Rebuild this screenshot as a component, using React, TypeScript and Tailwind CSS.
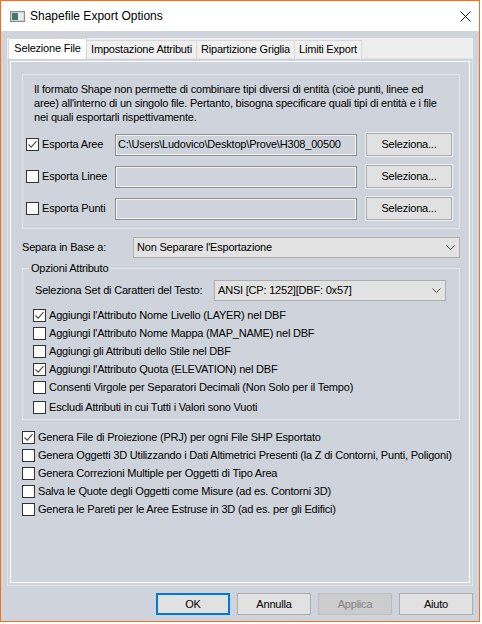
import React from 'react';

const font = { fontFamily: '"Liberation Sans", Arial, sans-serif' };

function Box({ checked }: { checked?: boolean }) {
  return (
    <span className="flex h-[13px] w-[13px] shrink-0 items-center justify-center border border-[#333333] bg-white">
      {checked && (
        <svg width="11" height="11" viewBox="0 0 11 11">
          <path d="M1.5 5.5 L4.2 8.2 L9.5 2.2" fill="none" stroke="#4a4a4a" strokeWidth="1.1" />
        </svg>
      )}
    </span>
  );
}

function Check({ label, checked, className = '' }: { label: string; checked?: boolean; className?: string }) {
  return (
    <div className={`flex h-[18px] items-center gap-[3px] ${className}`}>
      <Box checked={checked} />
      <span className="whitespace-nowrap">{label}</span>
    </div>
  );
}

function Chevron() {
  return (
    <svg width="9" height="5" viewBox="0 0 9 5">
      <path d="M0.5 0.5 L4.5 4.5 L8.5 0.5" fill="none" stroke="#505050" strokeWidth="1" />
    </svg>
  );
}

function Dropdown({ value, className }: { value: string; className: string }) {
  return (
    <div className={`flex h-[21px] items-center border border-[#adadad] bg-[#e3e3e3] pl-[3px] pr-[4px] ${className}`}>
      <span className="flex-1 whitespace-nowrap">{value}</span>
      <Chevron />
    </div>
  );
}

function FileRow({ label, checked, path }: { label: string; checked?: boolean; path?: string }) {
  return (
    <div className="flex h-[23px] items-center">
      <div className="flex w-[89px] items-center gap-[3px]">
        <Box checked={checked} />
        <span className="whitespace-nowrap">{label}</span>
      </div>
      <div className="flex h-[22px] w-[242px] items-center overflow-hidden whitespace-nowrap border border-[#8e8e8e] pl-[2px] shadow-[inset_0_0_0_1px_#f2f2f2]">
        {path}
      </div>
      <button className="ml-[9px] h-[23px] w-[86px] border border-[#adadad] bg-[#e1e1e1] shadow-[0_0_0_1px_#eeeeee]">
        Seleziona...
      </button>
    </div>
  );
}

export default function App() {
  return (
    <div className="h-[624px] w-[482px] bg-white" style={font}>
      <div className="flex h-[622px] w-[480px] flex-col border border-[#f0701e] bg-[#cfd4dc] text-[11px] tracking-[-0.2px] text-black">
        {/* title bar */}
        <div className="flex h-[30px] shrink-0 items-center bg-white pl-[9px]">
          <svg width="15" height="11" viewBox="0 0 15 11">
            <rect x="0.5" y="0.5" width="14" height="10" fill="#d4d4d4" stroke="#8a8a8a" />
            <rect x="2" y="2" width="6" height="7" fill="#3f7a6a" />
            <rect x="8" y="2" width="5" height="7" fill="#eaeaea" />
          </svg>
          <span className="ml-[5px] text-[12px] tracking-normal">Shapefile Export Options</span>
          <svg className="ml-auto mr-[8px]" width="11" height="11" viewBox="0 0 11 11">
            <path d="M0.5 0.5 L10.5 10.5 M10.5 0.5 L0.5 10.5" stroke="#111" strokeWidth="1" />
          </svg>
        </div>

        <div className="flex flex-1 flex-col px-[6px] pt-[7px]">
          {/* tab control */}
          <div className="flex h-[548px] w-[466px] flex-col bg-[#eeeeee]">
            <div className="flex h-[20px] shrink-0 items-end pl-[1px]">
              <div className="relative z-10 -mb-px flex h-[21px] w-[79px] items-center justify-center border border-b-0 border-[#d9d9d9] bg-white pb-[2px]">
                Selezione File
              </div>
              <div className="flex h-[18px] w-[110px] items-center justify-center border border-b-0 border-l-0 border-[#d9d9d9] bg-[#f0f0f0]">
                Impostazione Attributi
              </div>
              <div className="flex h-[18px] w-[98px] items-center justify-center border border-b-0 border-l-0 border-[#d9d9d9] bg-[#f0f0f0]">
                Ripartizione Griglia
              </div>
              <div className="flex h-[18px] w-[67px] items-center justify-center border border-b-0 border-l-0 border-[#d9d9d9] bg-[#f0f0f0]">
                Limiti Export
              </div>
            </div>
            <div className="flex-1 border border-[#e4e4e4] bg-[#cfd4dc] p-[2px]">
              <div className="h-full border border-white pl-[11px] pt-[12px]">
                {/* group 1 */}
                <div className="h-[155px] w-[438px] border border-[#e2e5ea] pl-[3px] pt-[7px]">
                  <p className="pl-[8px] leading-[14px]">
                    Il formato Shape non permette di combinare tipi diversi di entità (cioè punti, linee ed
                    <br />
                    aree) all'interno di un singolo file. Pertanto, bisogna specificare quali tipi di entità e i file
                    <br />
                    nei quali esportarli rispettivamente.
                  </p>
                  <div className="mt-[9px] flex flex-col gap-[9px]">
                    <FileRow label="Esporta Aree" checked path="C:\Users\Ludovico\Desktop\Prove\H308_00500" />
                    <FileRow label="Esporta Linee" />
                    <FileRow label="Esporta Punti" />
                  </div>
                </div>

                {/* separa */}
                <div className="mt-[8px] flex h-[21px] items-center">
                  <span className="w-[111px]">Separa in Base a:</span>
                  <Dropdown value="Non Separare l'Esportazione" className="w-[327px]" />
                </div>

                {/* group 2 */}
                <fieldset className="mt-[3px] w-[438px] border border-[#e2e5ea] pb-[3px]">
                  <legend className="ml-[6px] px-[2px] leading-[14px]">Opzioni Attributo</legend>
                  <div className="mt-[5px] flex h-[21px] items-center">
                    <span className="ml-[12px] w-[179px]">Seleziona Set di Caratteri del Testo:</span>
                    <Dropdown value="ANSI [CP: 1252][DBF: 0x57]" className="w-[232px]" />
                  </div>
                  <div className="mt-[5px] flex flex-col pl-[10px]">
                    <Check label="Aggiungi l'Attributo Nome Livello (LAYER) nel DBF" checked />
                    <Check label="Aggiungi l'Attributo Nome Mappa (MAP_NAME) nel DBF" />
                    <Check label="Aggiungi gli Attributi dello Stile nel DBF" />
                    <Check label="Aggiungi l'Attributo Quota (ELEVATION) nel DBF" checked />
                    <Check label="Consenti Virgole per Separatori Decimali  (Non Solo per il Tempo)" />
                    <Check label="Escludi Attributi in cui Tutti i Valori sono Vuoti" className="mt-[2px]" />
                  </div>
                </fieldset>

                {/* general */}
                <div className="mt-[8px] flex flex-col">
                  <Check label="Genera File di Proiezione (PRJ) per ogni File SHP Esportato" checked />
                  <Check label="Genera Oggetti 3D Utilizzando i Dati Altimetrici Presenti (la Z di Contorni, Punti, Poligoni)" />
                  <Check label="Genera Correzioni Multiple per Oggetti di Tipo Area" />
                  <Check label="Salva le Quote degli Oggetti come Misure (ad es. Contorni 3D)" />
                  <Check label="Genera le Pareti per le Aree Estruse in 3D (ad es. per gli Edifici)" />
                </div>
              </div>
            </div>
          </div>

          {/* buttons */}
          <div className="mt-[7px] flex justify-end gap-[7px]">
            <button className="h-[22px] w-[74px] border-2 border-[#0078d7] bg-[#e1e1e1]">OK</button>
            <button className="h-[22px] w-[74px] border border-[#adadad] bg-[#e1e1e1]">Annulla</button>
            <button className="h-[22px] w-[74px] border border-[#bfbfbf] bg-[#cccccc] text-[#838383]">Applica</button>
            <button className="h-[22px] w-[74px] border border-[#adadad] bg-[#e1e1e1]">Aiuto</button>
          </div>
        </div>
      </div>
    </div>
  );
}
